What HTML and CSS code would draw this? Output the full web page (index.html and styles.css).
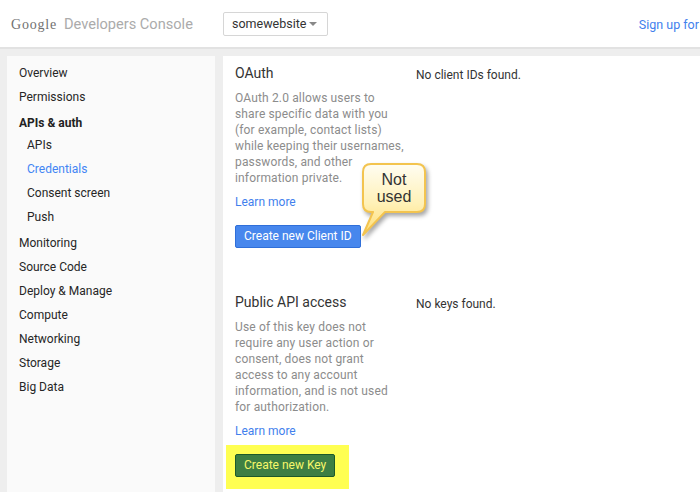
FILE: index.html
```html
<!DOCTYPE html>
<html lang="en">
<head>
<meta charset="utf-8">
<title>Google Developers Console - Credentials</title>
<link rel="stylesheet" href="styles.css">
</head>
<body>
<header class="topbar">
  <div class="brand"><span class="brand-google">Google</span><span class="brand-product">Developers Console</span></div>
  <div class="project">somewebsite<span class="caret"></span></div>
  <a class="signup" href="#">Sign up for</a>
</header>
<div class="layout">
  <nav class="side">
    <a class="nav-item" href="#">Overview</a>
    <a class="nav-item" href="#">Permissions</a>
    <div class="nav-group">
      <a class="nav-item nav-head" href="#">APIs &amp; auth</a>
      <div class="nav-sub">
        <a class="nav-item sub" href="#">APIs</a>
        <a class="nav-item sub active" href="#">Credentials</a>
        <a class="nav-item sub" href="#">Consent screen</a>
        <a class="nav-item sub" href="#">Push</a>
      </div>
    </div>
    <a class="nav-item nav-after" href="#">Monitoring</a>
    <a class="nav-item" href="#">Source Code</a>
    <a class="nav-item" href="#">Deploy &amp; Manage</a>
    <a class="nav-item" href="#">Compute</a>
    <a class="nav-item" href="#">Networking</a>
    <a class="nav-item" href="#">Storage</a>
    <a class="nav-item" href="#">Big Data</a>
  </nav>
  <main class="content">
    <section class="cred">
      <div class="info">
        <h2>OAuth</h2>
        <p>OAuth 2.0 allows users to share specific data with you (for example, contact lists) while keeping their usernames, passwords, and other information private.</p>
        <a class="learn" href="#">Learn more</a>
        <button class="btn btn-blue" type="button">Create new Client ID</button>
      </div>
      <div class="status">No client IDs found.</div>
    </section>
    <section class="cred cred-second">
      <div class="info">
        <h2>Public API access</h2>
        <p>Use of this key does not require any user action or consent, does not grant access to any account information, and is not used for authorization.</p>
        <a class="learn" href="#">Learn more</a>
        <span class="highlight"><button class="btn btn-green" type="button">Create new Key</button></span>
      </div>
      <div class="status">No keys found.</div>
    </section>
    <div class="callout">
      <svg class="callout-shape" width="76" height="80" viewBox="0 0 76 80">
        <defs>
          <linearGradient id="cg" x1="0" y1="0" x2="0" y2="1">
            <stop offset="0" stop-color="#fffdf2"/>
            <stop offset="0.55" stop-color="#fff1b8"/>
            <stop offset="1" stop-color="#ffde74"/>
          </linearGradient>
        </defs>
        <path d="M13 4 H59 Q67 4 67 12 V44 Q67 52 59 52 H27 L5 75 L15 52 H13 Q5 52 5 44 V12 Q5 4 13 4 Z" fill="url(#cg)" stroke="#f3c44f" stroke-width="2" stroke-linejoin="round"/>
      </svg>
      <div class="callout-text">Not<br>used</div>
    </div>
  </main>
</div>
</body>
</html>
```
FILE: styles.css
```css
* { box-sizing: border-box; }
html, body { margin: 0; height: 100%; }
body {
  background: #eeeeee;
  font-family: Roboto, "Liberation Sans", sans-serif;
  overflow: hidden;
  display: flex;
  flex-direction: column;
}
a { text-decoration: none; }

.topbar {
  height: 49px;
  flex-shrink: 0;
  background: #fff;
  border-bottom: 2px solid #e2e2e2;
  display: flex;
  align-items: center;
  white-space: nowrap;
  overflow: hidden;
}
.topbar > * { flex-shrink: 0; }
.brand {
  width: 212px;
  margin-left: 11px;
  display: flex;
  align-items: baseline;
  gap: 7px;
  padding-top: 1px;
}
.brand-google {
  font-family: "Liberation Serif", serif;
  font-size: 14px;
  letter-spacing: 0.8px;
  color: #717171;
}
.brand-product {
  font-size: 14.6px;
  font-weight: 400;
  color: #ababab;
}
.project {
  width: 105px;
  height: 24px;
  border: 1px solid #d6d6d6;
  border-radius: 2px;
  display: flex;
  align-items: center;
  padding-left: 8px;
  font-size: 12.5px;
  color: #333;
}
.caret {
  margin-left: auto;
  margin-right: 10px;
  width: 0;
  height: 0;
  border-left: 4px solid transparent;
  border-right: 4px solid transparent;
  border-top: 4px solid #888;
}
.signup {
  margin-left: auto;
  margin-right: 1px;
  font-size: 12.5px;
  color: #427fed;
  padding-top: 1px;
}

.layout {
  flex: 1;
  display: flex;
  gap: 8px;
  padding: 7px 0 0 7px;
  min-height: 0;
}
.side {
  width: 208px;
  flex-shrink: 0;
  background: #fafafa;
  padding-top: 5px;
  font-size: 12px;
}
.nav-item {
  display: block;
  height: 24px;
  line-height: 24px;
  padding-left: 12px;
  color: #262626;
}
.nav-head { margin-top: 2px; font-weight: bold; color: #222; }
.nav-sub { margin-top: -2px; }
.nav-item.sub { padding-left: 20px; }
.nav-item.active { color: #4285f4; }
.nav-after { margin-top: 2px; }

.content {
  flex: 1;
  position: relative;
  background: #fff;
  padding: 7px 12px 0 12px;
}
.cred {
  display: grid;
  grid-template-columns: 170px 1fr;
  column-gap: 11px;
}
.cred-second { margin-top: 44px; }
.info h2 {
  margin: 0 0 7px;
  font-size: 14px;
  font-weight: normal;
  line-height: 20px;
  color: #333;
}
.info p {
  margin: 0 0 8px;
  font-size: 12px;
  line-height: 16px;
  letter-spacing: 0.15px;
  color: #8c8c8c;
}
.learn {
  display: block;
  font-size: 12px;
  line-height: 16px;
  color: #427fed;
  margin-bottom: 15px;
}
.btn {
  height: 23px;
  padding: 0 8px;
  border-radius: 2px;
  font-family: inherit;
  font-size: 12px;
  line-height: 21px;
  cursor: pointer;
}
.btn-blue {
  background: #4787ed;
  border: 1px solid #2f6fd9;
  color: #fff;
}
.btn-green {
  background: #3d7f43;
  border: 1px solid #1d5a2a;
  color: #f7f76a;
}
.highlight {
  display: inline-block;
  background: #ffff52;
  padding: 9px 14px 12px 9px;
  margin: -9px 0 0 -9px;
}
.status {
  padding-top: 4px;
  font-size: 12px;
  line-height: 16px;
  color: #333;
}

.callout {
  position: absolute;
  left: 135px;
  top: 104px;
  width: 76px;
  height: 80px;
}
.callout-shape {
  position: absolute;
  left: 0;
  top: 0;
  filter: drop-shadow(2px 3px 2px rgba(0, 0, 0, 0.35));
}
.callout-text {
  position: absolute;
  left: 5px;
  top: 4px;
  width: 62px;
  height: 48px;
  display: flex;
  align-items: center;
  justify-content: center;
  text-align: center;
  font-family: "Liberation Sans", Arial, sans-serif;
  font-size: 16px;
  line-height: 17px;
  color: #333;
}
```
